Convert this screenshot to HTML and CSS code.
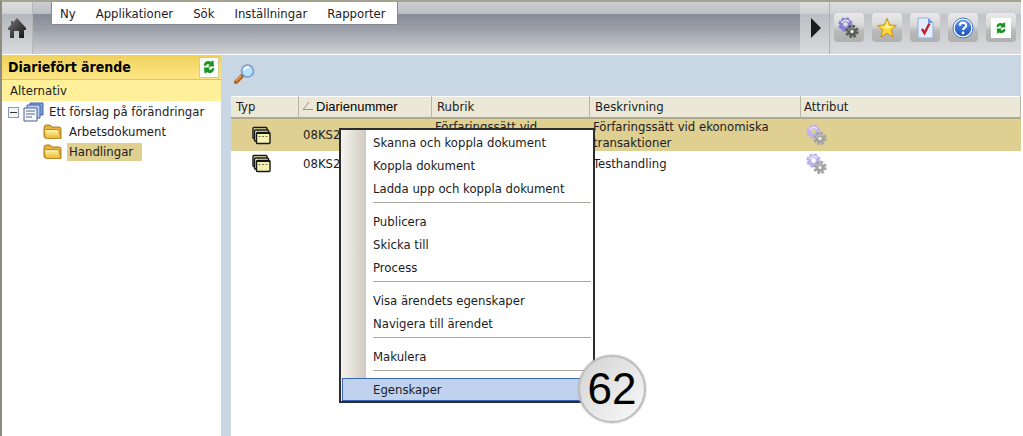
FILE: index.html
```html
<!DOCTYPE html>
<html lang="sv">
<head>
<meta charset="utf-8">
<title>Diariefört ärende</title>
<link rel="stylesheet" href="styles.css">
</head>
<body>
<svg class="defs" aria-hidden="true">
  <defs>
    <linearGradient id="gold" x1="0" y1="0" x2="0" y2="1"><stop offset="0" stop-color="#fff6b0"/><stop offset="1" stop-color="#ecb52c"/></linearGradient>
    <linearGradient id="dark" x1="0" y1="0" x2="1" y2="1"><stop offset="0" stop-color="#777"/><stop offset="1" stop-color="#111"/></linearGradient>
    <linearGradient id="blue" x1="0" y1="0" x2="0" y2="1"><stop offset="0" stop-color="#5b93e6"/><stop offset="1" stop-color="#1a4fb4"/></linearGradient>
    <symbol id="refresh" viewBox="0 0 12 12">
      <path d="M1.500 5C1.500 1.500 5 0 7.800 1.600L9.800 .3 10.300 5.500H5L6.400 4C5 3.300 3.600 3.600 3.500 5Z" fill="#18951f"/>
      <path d="M10.500 7C10.500 10.500 7 12 4.200 10.400L2.200 11.700 1.700 6.500H7L5.600 8C7 8.700 8.400 8.400 8.500 7Z" fill="#18951f"/>
    </symbol>
    <symbol id="gears" viewBox="0 0 22 22">
      <circle cx="7.500" cy="7.500" r="4.200" fill="none" stroke="currentColor" stroke-width="3.600"/>
      <circle cx="7.500" cy="7.500" r="6" fill="none" stroke="currentColor" stroke-width="2.400" stroke-dasharray="3 1.700"/>
      <path d="M3.500 6A4.500 4.500 0 0 1 11 5" fill="none" stroke="#e6e2ff" stroke-width="1.600"/>
      <g class="gear-front"><circle cx="14" cy="14.500" r="3.400" fill="currentColor" stroke="currentColor" stroke-width="2.600"/>
      <circle cx="14" cy="14.500" r="5.400" fill="none" stroke="currentColor" stroke-width="2.600" stroke-dasharray="2.600 1.600"/></g>
      <path d="M10.500 13.500A4 4 0 0 1 17 12" fill="none" stroke="#e4e4e4" stroke-opacity=".6"/>
      <circle cx="14" cy="14.500" r="1.700" fill="#efefe6"/>
    </symbol>
    <symbol id="folder" viewBox="0 0 20 16">
      <path d="M1 4Q1 1 3 1H7L9 3H16Q18 3 18 5V14H3Q1 14 1 12Z" fill="#e8b43c" stroke="#a87a1c"/>
      <path d="M1.500 6Q1.500 5.500 2.500 5.500H14Q15.500 5.500 16 7L18 14.500H4Q2 14.500 2 13Z" fill="url(#gold)" stroke="#b98c24"/>
    </symbol>
    <symbol id="cards" viewBox="0 0 19 19">
      <g fill="#f6f3b0" stroke="#161616" stroke-width="1.400"><rect x="1" y="1.500" width="14" height="11" rx="1"/><rect x="2.500" y="4" width="14" height="11" rx="1"/><rect x="4.500" y="6.500" width="13.500" height="11" rx="1"/></g>
      <path d="M5 7.500H18" stroke="#161616"/><path d="M6.500 10.500H16.500" stroke="#77734e" stroke-dasharray="2 1.500"/>
    </symbol>
  </defs>
</svg>
<div class="app">
  <header class="topbar">
    <button class="home" aria-label="Hem"><svg width="20" height="22" viewBox="0 0 20 22"><path d="M10 1L19 11V13H17V21H12V14H7V21H3V13H1V11L4 8V4H6V5.500Z" fill="url(#dark)"/></svg></button>
    <nav class="mainmenu"><a href="#">Ny</a><a href="#">Applikationer</a><a href="#">Sök</a><a href="#">Inställningar</a><a href="#">Rapporter</a></nav>
    <button class="expand" aria-label="Visa fler"><svg width="10" height="20" viewBox="0 0 10 20"><path d="M0 0L10 10L0 20Z" fill="#1d1d1d"/></svg></button>
    <div class="tools">
      <button class="tool" aria-label="Inställningar"><svg class="gears-dark" width="22" height="22"><use href="#gears"/></svg></button>
      <button class="tool" aria-label="Favoriter"><svg width="22" height="22" viewBox="0 0 22 22"><path d="M11 1.500L13.700 8L20.500 8.500L15.300 13L17.200 20L11 16.200L4.800 20L6.700 13L1.500 8.500L8.300 8Z" fill="#ffd83a" stroke="#c8901c"/><path d="M11 4L12.500 9L17 9.500L11 12L6 10L9.500 9Z" fill="#fff08a"/></svg></button>
      <button class="tool" aria-label="Uppgifter"><svg width="22" height="22" viewBox="0 0 22 22"><path d="M4 1H14L19 6V21H4Z" fill="#e2eefc" stroke="#8fb2de"/><path d="M14 1V6H19Z" fill="#6c9bd8"/><path d="M8 12L10.500 16L15.500 6.500" fill="none" stroke="#c51f2c" stroke-width="2.400"/></svg></button>
      <button class="tool" aria-label="Hjälp"><svg width="22" height="22" viewBox="0 0 22 22"><circle cx="11" cy="11" r="10" fill="#fff" stroke="#4277c8"/><circle cx="11" cy="11" r="8.300" fill="url(#blue)"/><path d="M7.800 8.800C7.800 4.600 14.200 4.800 14.200 8.500C14.200 10.800 11 10.800 11 13" fill="none" stroke="#fff" stroke-width="2.200"/><circle cx="11" cy="16" r="1.400" fill="#fff"/></svg></button>
      <button class="tool" aria-label="Uppdatera"><svg class="page" width="20" height="20" viewBox="-4 -4 20 20"><use href="#refresh" width="12" height="12"/></svg></button>
    </div>
  </header>
  <div class="body">
    <aside class="side">
      <div class="side-head"><h1>Diariefört ärende</h1><button class="refresh" aria-label="Uppdatera"><svg width="14" height="14"><use href="#refresh"/></svg></button></div>
      <div class="side-sub">Alternativ</div>
      <ul class="tree">
        <li class="root"><button class="toggle" aria-label="Fäll ihop"></button>
          <svg width="21" height="20" viewBox="0 0 21 20"><path d="M7 1H20V13H7Z" fill="#7f9fdc" stroke="#44639f"/><path d="M4 3H17V16H4Z" fill="#b9cdf2" stroke="#44639f"/><path d="M1 6H14V19H1Z" fill="#f4f7fd" stroke="#4b5f88"/><path d="M3 9H12M3 12H12M3 15H9" stroke="#56688c"/></svg><a href="#">Ett förslag på förändringar</a></li>
        <li class="leaf"><svg width="20" height="16"><use href="#folder"/></svg><a href="#">Arbetsdokument</a></li>
        <li class="leaf"><svg width="20" height="16"><use href="#folder"/></svg><a href="#" class="current">Handlingar</a></li>
      </ul>
    </aside>
    <main class="main">
      <div class="searchbar"><button class="search" aria-label="Sök"><svg width="22" height="22" viewBox="0 0 22 22"><path d="M2 19L8 13" stroke="#b5651e" stroke-width="4" stroke-linecap="round"/><path d="M2 18L7 13" stroke="#f0a050" stroke-width="1.500"/><circle cx="13.500" cy="8" r="6" fill="#b5e1fb" stroke="#7899c8" stroke-width="1.600"/><path d="M10 7Q11 4 15 4" stroke="#fff" stroke-width="2" fill="none"/></svg></button></div>
      <div class="content">
        <table class="grid">
          <colgroup><col class="c-type"><col class="c-num"><col class="c-title"><col class="c-desc"><col></colgroup>
          <thead><tr><th>Typ</th><th class="sorted"><svg width="11" height="10" viewBox="0 0 11 10"><path d="M7 1L1 8.500H11" fill="none" stroke="#96968a"/></svg>Diarienummer</th><th>Rubrik</th><th>Beskrivning</th><th class="attr">Attribut</th></tr></thead>
          <tbody>
            <tr class="selected"><td class="icon"><svg width="19" height="19"><use href="#cards"/></svg></td><td class="num">08KS2</td><td class="top">Förfaringssätt vid</td><td>Förfaringssätt vid ekonomiska transaktioner</td><td class="attr"><svg class="gears-light" width="22" height="22"><use href="#gears"/></svg></td></tr>
            <tr><td class="icon"><svg width="19" height="19"><use href="#cards"/></svg></td><td class="num">08KS2</td><td></td><td>Testhandling</td><td class="attr"><svg class="gears-light" width="22" height="22"><use href="#gears"/></svg></td></tr>
          </tbody>
        </table>
      </div>
    </main>
  </div>
  <div class="context" role="menu">
    <button role="menuitem">Skanna och koppla dokument</button><button role="menuitem">Koppla dokument</button><button role="menuitem">Ladda upp och koppla dokument</button>
    <hr>
    <button role="menuitem">Publicera</button><button role="menuitem">Skicka till</button><button role="menuitem">Process</button>
    <hr>
    <button role="menuitem">Visa ärendets egenskaper</button><button role="menuitem">Navigera till ärendet</button>
    <hr>
    <button role="menuitem">Makulera</button>
    <hr>
    <button role="menuitem" class="active">Egenskaper</button>
    <span class="badge">62</span>
  </div>
</div>
</body>
</html>
```
FILE: styles.css
```css
* { box-sizing: border-box; }
body { margin: 0; font: 13px/16px "DejaVu Sans Condensed", Tahoma, "DejaVu Sans", sans-serif; color: #1c1c24; background: #fff; }
button { font: inherit; color: inherit; margin: 0; padding: 0; border: 0; background: none; }
a { color: inherit; text-decoration: none; }
svg { display: block; flex: none; }
.defs { position: absolute; width: 0; height: 0; }
.app { position: relative; display: flex; flex-direction: column; min-height: 100vh; margin-right: 2px; border-top: 2px solid #a3a38f; border-left: 2px solid #8d8b82; }

.topbar { display: flex; height: 53px; border-bottom: 1px solid #fff; background: linear-gradient(#cdced2 0, #b9bcc2 12px, #858b97 12px, #9ca1aa 28px, #d0d1d5 52px); }
.home { width: 31px; padding: 0 0 0 5px; border-right: 1px solid #b5b7bb; background: linear-gradient(#dcdddf 0, #cfd0d3 12px, #b3b6bb 12px, #d9dadd 52px); }
.mainmenu { display: flex; gap: 20px; align-self: flex-start; height: 23px; margin-left: 18px; padding: 4px 11px 0 8px; border: 1px solid #858993; border-top: 0; background: #fff; }
.expand { width: 30px; margin-left: auto; padding-left: 11px; border-right: 1px solid #aeb0b4; background: linear-gradient(#dcdddf 0, #cfd0d3 12px, #bbbec3 12px, #d9dadd 52px); }
.tools { display: flex; gap: 8px; padding: 11px 5px 0 4px; background: linear-gradient(#dcdddf 0, #cfd0d3 12px, #c1c3c7 12px, #d9dadd 52px); }
.tool { display: flex; align-items: center; justify-content: center; width: 30px; height: 29px; border-radius: 4px; background: linear-gradient(#e9e9ea 0, #d9d9da 12px, #b9b9b9 18px, #b0b0b0 100%); }
.page { background: #fff; }
.gears-dark { color: #8a7fd0; --front: #565e58; }
.gears-light { color: #bdb4ee; --front: #a2a2a6; }
.gear-front { color: var(--front); }

.body { display: flex; flex: 1; background: #c9d7e5; }
.side { width: 219px; background: #fff; }
.side-head { display: flex; align-items: center; justify-content: space-between; height: 25px; padding: 0 2px 0 6px; border-bottom: 1px solid #dcc35c; background: linear-gradient(#eed05a, #ffe786); }
h1 { margin: 0; font-size: 14px; line-height: 16px; color: #000; }
.refresh { display: flex; align-items: center; justify-content: center; width: 20px; height: 21px; border: 1px solid #d5c98f; background: #fff; }
.side-sub { height: 21px; padding: 3px 8px 0; background: #fff099; }
.tree { margin: 0; padding: 0; list-style: none; }
.tree li { display: flex; align-items: center; height: 20px; padding-top: 2px; }
.root { gap: 5px; padding-left: 6px; }
.leaf { gap: 4px; padding-left: 41px; }
.leaf a { padding: 1px 9px 1px 2px; }
.current { background: #dfcf90; }
.toggle { width: 11px; height: 11px; margin-right: -1px; border: 1px solid #8797b4; background: linear-gradient(#333, #333) center / 7px 1px no-repeat #f4f4f4; }

.main { display: flex; flex: 1; flex-direction: column; padding-left: 10px; }
.searchbar { height: 41px; padding: 8px 3px; }
.content { flex: 1; background: #fff; }
.grid { width: 100%; border-collapse: separate; border-spacing: 0; table-layout: fixed; line-height: 16px; }
.c-type { width: 68px; }
.c-num { width: 133px; }
.c-title { width: 158px; }
.c-desc { width: 211px; }
.grid th { height: 23px; padding: 0 5px; font-weight: 400; text-align: left; border-right: 1px solid #b9b7a6; border-bottom: 2px solid #aca98f; background: #ebe8d8; box-shadow: inset 0 1px #fff; }
.grid .sorted { padding: 0 3px; font-family: "Liberation Sans", Arial, sans-serif; color: #000; }
.sorted svg { display: inline-block; margin-right: 3px; }
.grid td { height: 25px; padding: 0 10px 0 3px; }
.grid .selected td { height: 32px; background: #dfcf90; }
.grid .icon { padding-left: 21px; }
.grid .num { padding-left: 4px; }
.grid .top { vertical-align: top; }
.grid .attr { padding-left: 3px; }
.grid td.attr svg { margin-left: 2px; }

.context { position: absolute; top: 126px; left: 337px; width: 256px; padding: 1px 1px 0; border: 2px solid #2c2c2c; background: linear-gradient(90deg, #f6f4ef, #d0cbc0) 0 0 / 25px 100% no-repeat #fff; }
.context button { display: block; width: 100%; height: 23px; padding-left: 30px; border: 1px solid transparent; text-align: left; }
.context hr { height: 1px; margin: 2px 1px 7px 31px; border: 0; background: #aaa7a2; }
.context .active { border-color: #3d66b4; background: #c1d2ee; }
.badge { position: absolute; right: -53px; bottom: -22px; display: flex; align-items: center; justify-content: center; width: 68px; height: 68px; border: 2px solid #bcbcbc; border-radius: 50%; background: linear-gradient(135deg, #d2d2d2, #fafafa); box-shadow: 0 0 2px #aaa; color: #000; font: 44px/44px "Liberation Sans", Arial, sans-serif; }
```
